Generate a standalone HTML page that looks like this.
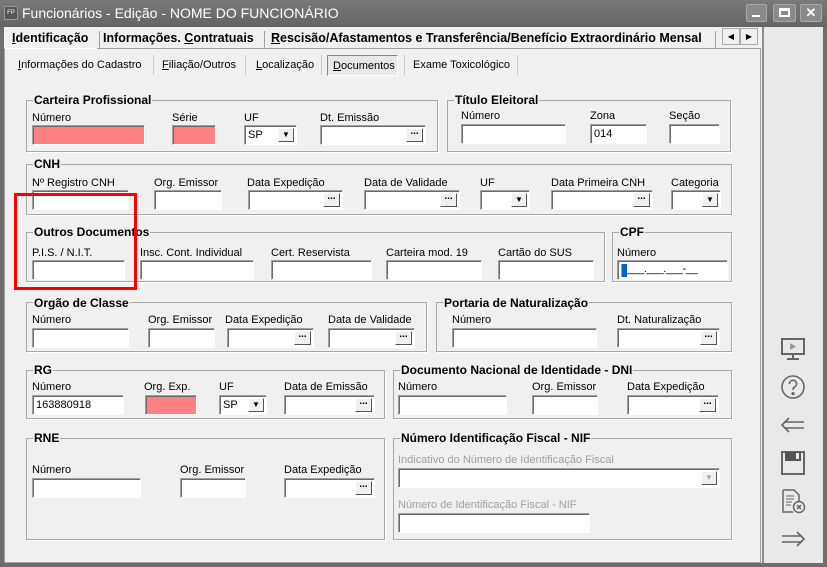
<!DOCTYPE html>
<html><head><meta charset="utf-8"><style>
*{box-sizing:border-box;margin:0;padding:0}
body{width:827px;height:567px;overflow:hidden;background:#6e6e6e;font-family:"Liberation Sans",Tahoma,sans-serif;font-size:12px;color:#000;position:relative}
div,span,svg{position:absolute}
.tb{left:0;top:0;width:827px;height:27px;background:linear-gradient(#7a7a7a,#646464)}
.tt{left:22px;top:5px;color:#fff;font-size:14px;white-space:nowrap}
.wb{top:4px;height:18px;background:#8a8a8a;border:1px solid #a8a8a8;border-radius:2px}
.main{left:4px;top:27px;width:819px;height:536px;background:#f0f0f0}
.rp{left:762px;top:27px;width:61px;height:536px;background:#e9e9e9;border-left:2px solid #8c8c8c}
.tab{top:31px;font-weight:bold;font-size:12.5px;white-space:nowrap}
.tabsep{top:31px;width:1px;height:17px;background:#a0a0a0}
.st{top:59px;white-space:nowrap;font-size:11px}
.ss{top:55px;width:1px;height:20px;background:#c8c8c8}
.g{border:1px solid #a8a8a8;box-shadow:1px 1px 0 #fff}
.gt{font-weight:bold;background:#f0f0f0;padding:0 1px;white-space:nowrap;line-height:14px}
.l{white-space:nowrap;line-height:14px;font-size:11px}
.d{color:#a0a0a0}
.i{background:#fff;height:20px;border:1px solid;border-color:#a0a0a0 #fff #fff #a0a0a0;box-shadow:inset 1px 1px #6b6b6b;padding:2px 3px;line-height:14px;font-size:11px}
.p{background:#ff8080}
.b{right:2px;top:2px;width:17px;height:14px;background:#f0f0f0;border:1px solid;border-color:#fff #555 #555 #fff;font-size:10px;line-height:6px;text-align:center;font-weight:bold}
.ar{right:2px;top:2px;width:16px;height:14px;background:#f0f0f0;border:1px solid;border-color:#fff #555 #555 #fff;font-size:8px;line-height:12px;text-align:center}
.ic{left:779px;width:28px;height:28px}
</style></head><body>
<div class="tb"></div>
<div style="left:4px;top:6px;width:14px;height:14px;background:#555;border:1px solid #999;color:#fff;font-size:6px;line-height:12px;text-align:center">FP</div>
<div class="tt">Funcionários - Edição - NOME DO FUNCIONÁRIO</div>
<div class="wb" style="left:746px;width:21px"><span style="left:5px;top:10px;width:8px;height:2px;background:#fff"></span></div>
<div class="wb" style="left:773px;width:23px"><span style="left:5px;top:3px;width:11px;height:9px;border:2px solid #fff;border-top-width:3px"></span></div>
<div class="wb" style="left:800px;width:22px;color:#fff;font-weight:bold;text-align:center;line-height:15px;font-size:13px">✕</div>
<div class="main"></div>
<div class="rp"></div>
<div style="left:4px;top:48px;width:757px;height:515px;border:1px solid #a0a0a0;border-top-color:#fff;background:#f0f0f0"></div>
<div style="left:97px;top:48px;width:664px;height:1px;background:#a0a0a0"></div>
<div class="tab" style="left:12px"><u>I</u>dentificação</div>
<div class="tabsep" style="left:99px"></div>
<div class="tab" style="left:103px">Informações. <u>C</u>ontratuais</div>
<div class="tabsep" style="left:264px"></div>
<div class="tab" style="left:271px"><u>R</u>escisão/Afastamentos e Transferência/Benefício Extraordinário Mensal</div>
<div class="tabsep" style="left:715px"></div>
<div style="left:722px;top:28px;width:18px;height:17px;background:#f0f0f0;border:1px solid #aaa;font-size:8px;text-align:center;line-height:15px">◀</div>
<div style="left:740px;top:28px;width:18px;height:17px;background:#f0f0f0;border:1px solid #aaa;font-size:8px;text-align:center;line-height:15px">▶</div>
<div class="st" style="left:18px"><u>I</u>nformações do Cadastro</div>
<div class="ss" style="left:153px"></div>
<div class="st" style="left:162px"><u>F</u>iliação/Outros</div>
<div class="ss" style="left:245px"></div>
<div class="st" style="left:256px"><u>L</u>ocalização</div>
<div class="ss" style="left:321px"></div>
<div style="left:327px;top:55px;width:71px;height:21px;border:1px solid;border-color:#888 #fff #fff #888;background:#e8e8e8"></div>
<div class="st" style="left:333px;top:60px"><u>D</u>ocumentos</div>
<div class="ss" style="left:404px"></div>
<div class="st" style="left:413px">Exame Toxicológico</div>
<div class="ss" style="left:517px"></div>

<div class="g" style="left:26px;top:100px;width:412px;height:52px"></div>
<div class="gt" style="left:33px;top:93px">Carteira Profissional</div>
<div class="l" style="left:32px;top:111px">Número</div>
<div class="l" style="left:172px;top:111px">Série</div>
<div class="l" style="left:244px;top:111px">UF</div>
<div class="l" style="left:320px;top:111px">Dt. Emissão</div>
<div class="i p" style="left:32px;top:125px;width:113px"></div>
<div class="i p" style="left:172px;top:125px;width:44px"></div>
<div class="i" style="left:244px;top:125px;width:53px">SP<span class="ar">▼</span></div>
<div class="i" style="left:320px;top:125px;width:106px"><span class="b">...</span></div>

<div class="g" style="left:447px;top:100px;width:284px;height:52px"></div>
<div class="gt" style="left:454px;top:93px">Título Eleitoral</div>
<div class="l" style="left:461px;top:109px">Número</div>
<div class="l" style="left:590px;top:109px">Zona</div>
<div class="l" style="left:669px;top:109px">Seção</div>
<div class="i" style="left:461px;top:124px;width:105px"></div>
<div class="i" style="left:590px;top:124px;width:57px">014</div>
<div class="i" style="left:669px;top:124px;width:51px"></div>

<div class="g" style="left:26px;top:164px;width:706px;height:51px"></div>
<div class="gt" style="left:33px;top:157px">CNH</div>
<div class="l" style="left:32px;top:176px">Nº Registro CNH</div>
<div class="l" style="left:154px;top:176px">Org. Emissor</div>
<div class="l" style="left:247px;top:176px">Data Expedição</div>
<div class="l" style="left:364px;top:176px">Data de Validade</div>
<div class="l" style="left:480px;top:176px">UF</div>
<div class="l" style="left:551px;top:176px">Data Primeira CNH</div>
<div class="l" style="left:671px;top:176px">Categoria</div>
<div class="i" style="left:32px;top:190px;width:97px"></div>
<div class="i" style="left:154px;top:190px;width:68px"></div>
<div class="i" style="left:248px;top:190px;width:95px"><span class="b">...</span></div>
<div class="i" style="left:364px;top:190px;width:96px"><span class="b">...</span></div>
<div class="i" style="left:480px;top:190px;width:50px"><span class="ar">▼</span></div>
<div class="i" style="left:551px;top:190px;width:102px"><span class="b">...</span></div>
<div class="i" style="left:671px;top:190px;width:50px"><span class="ar">▼</span></div>

<div class="g" style="left:26px;top:232px;width:579px;height:50px"></div>
<div class="gt" style="left:33px;top:225px">Outros Documentos</div>
<div class="l" style="left:32px;top:246px">P.I.S. / N.I.T.</div>
<div class="l" style="left:140px;top:246px">Insc. Cont. Individual</div>
<div class="l" style="left:271px;top:246px">Cert. Reservista</div>
<div class="l" style="left:386px;top:246px">Carteira mod. 19</div>
<div class="l" style="left:498px;top:246px">Cartão do SUS</div>
<div class="i" style="left:32px;top:260px;width:93px"></div>
<div class="i" style="left:140px;top:260px;width:114px"></div>
<div class="i" style="left:271px;top:260px;width:101px"></div>
<div class="i" style="left:386px;top:260px;width:96px"></div>
<div class="i" style="left:498px;top:260px;width:96px"></div>
<div style="left:14px;top:193px;width:123px;height:97px;border:3px solid #f00"></div>

<div class="g" style="left:612px;top:232px;width:120px;height:50px"></div>
<div class="gt" style="left:619px;top:225px">CPF</div>
<div class="l" style="left:617px;top:246px">Número</div>
<div class="i" style="left:617px;top:260px;width:111px;padding:0 2px;line-height:17px"><span style="left:3px;top:3px;width:6px;height:13px;background:#0066cc;border-left:1px solid #f80"></span><span style="left:9px;top:0;letter-spacing:-0.5px">___.___.___-__</span></div>

<div class="g" style="left:26px;top:302px;width:401px;height:50px"></div>
<div class="gt" style="left:33px;top:296px">Orgão de Classe</div>
<div class="l" style="left:32px;top:313px">Número</div>
<div class="l" style="left:148px;top:313px">Org. Emissor</div>
<div class="l" style="left:225px;top:313px">Data Expedição</div>
<div class="l" style="left:328px;top:313px">Data de Validade</div>
<div class="i" style="left:32px;top:328px;width:97px"></div>
<div class="i" style="left:148px;top:328px;width:67px"></div>
<div class="i" style="left:227px;top:328px;width:87px"><span class="b">...</span></div>
<div class="i" style="left:328px;top:328px;width:87px"><span class="b">...</span></div>

<div class="g" style="left:436px;top:302px;width:296px;height:50px"></div>
<div class="gt" style="left:443px;top:296px">Portaria de Naturalização</div>
<div class="l" style="left:452px;top:313px">Número</div>
<div class="l" style="left:617px;top:313px">Dt. Naturalização</div>
<div class="i" style="left:452px;top:328px;width:145px"></div>
<div class="i" style="left:617px;top:328px;width:103px"><span class="b">...</span></div>

<div class="g" style="left:26px;top:370px;width:359px;height:49px"></div>
<div class="gt" style="left:33px;top:363px">RG</div>
<div class="l" style="left:32px;top:380px">Número</div>
<div class="l" style="left:144px;top:380px">Org. Exp.</div>
<div class="l" style="left:219px;top:380px">UF</div>
<div class="l" style="left:284px;top:380px">Data de Emissão</div>
<div class="i" style="left:32px;top:395px;width:92px">163880918</div>
<div class="i p" style="left:145px;top:395px;width:52px"></div>
<div class="i" style="left:219px;top:395px;width:48px">SP<span class="ar">▼</span></div>
<div class="i" style="left:284px;top:395px;width:91px"><span class="b">...</span></div>

<div class="g" style="left:393px;top:370px;width:339px;height:49px"></div>
<div class="gt" style="left:400px;top:363px">Documento Nacional de Identidade - DNI</div>
<div class="l" style="left:398px;top:380px">Número</div>
<div class="l" style="left:532px;top:380px">Org. Emissor</div>
<div class="l" style="left:627px;top:380px">Data Expedição</div>
<div class="i" style="left:398px;top:395px;width:109px"></div>
<div class="i" style="left:532px;top:395px;width:66px"></div>
<div class="i" style="left:627px;top:395px;width:92px"><span class="b">...</span></div>

<div class="g" style="left:26px;top:438px;width:359px;height:102px"></div>
<div class="gt" style="left:33px;top:431px">RNE</div>
<div class="l" style="left:32px;top:463px">Número</div>
<div class="l" style="left:180px;top:463px">Org. Emissor</div>
<div class="l" style="left:284px;top:463px">Data Expedição</div>
<div class="i" style="left:32px;top:478px;width:109px"></div>
<div class="i" style="left:180px;top:478px;width:66px"></div>
<div class="i" style="left:284px;top:478px;width:91px"><span class="b">...</span></div>

<div class="g" style="left:393px;top:438px;width:339px;height:102px"></div>
<div class="gt" style="left:400px;top:431px">Número Identificação Fiscal - NIF</div>
<div class="l d" style="left:398px;top:453px">Indicativo do Número de Identificação Fiscal</div>
<div class="i" style="left:398px;top:468px;width:322px"><span class="ar" style="color:#aaa">▼</span></div>
<div class="l d" style="left:398px;top:498px">Número de Identificação Fiscal - NIF</div>
<div class="i" style="left:398px;top:513px;width:192px"></div>

<svg class="ic" style="top:335px" viewBox="0 0 28 28" fill="none" stroke="#666" stroke-width="2"><rect x="3" y="4" width="22" height="15"/><path d="M14 19v4M8 24h12"/><path d="M11 8l6 3.5-6 3.5z" fill="#999" stroke="none"/></svg>
<svg class="ic" style="top:373px" viewBox="0 0 28 28" fill="none" stroke="#666" stroke-width="1.6"><circle cx="14" cy="14" r="11"/><path d="M10.5 11a3.5 3.5 0 1 1 5 3c-1.2.6-1.5 1.3-1.5 3"/><circle cx="14" cy="20.5" r="0.8" fill="#666"/></svg>
<svg class="ic" style="top:411px" viewBox="0 0 28 28" fill="none" stroke="#666" stroke-width="1.6"><path d="M10 7L3 14l7 7M5 11h20M5 17h20"/></svg>
<svg class="ic" style="top:449px" viewBox="0 0 28 28"><path d="M3 3h22v22H3z" fill="none" stroke="#666" stroke-width="2"/><rect x="6" y="3" width="16" height="9" fill="#555"/><rect x="17" y="4" width="3" height="6" fill="#e9e9e9"/></svg>
<svg class="ic" style="top:487px" viewBox="0 0 28 28" fill="none" stroke="#666" stroke-width="1.5"><path d="M4 3h11l5 5v6M4 3v22h10"/><path d="M7 9h8M7 12h8M7 15h6M7 18h5" stroke-width="1"/><circle cx="20" cy="20" r="5.5"/><path d="M18 18l4 4M22 18l-4 4"/></svg>
<svg class="ic" style="top:525px" viewBox="0 0 28 28" fill="none" stroke="#666" stroke-width="1.6"><path d="M18 7l7 7-7 7M3 11h20M3 17h20"/></svg>
</body></html>
